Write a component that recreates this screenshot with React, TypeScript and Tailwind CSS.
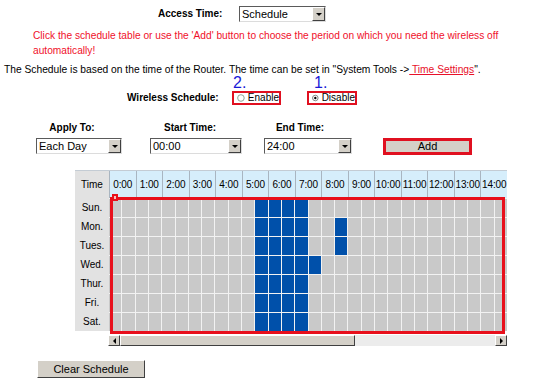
import React from "react";

const blue: Record<string, number[]> = {
  "Sun.": [11, 12, 13, 14],
  "Mon.": [11, 12, 13, 14, 17],
  "Tues.": [11, 12, 13, 14, 17],
  "Wed.": [11, 12, 13, 14, 15],
  "Thur.": [11, 12, 13, 14],
  "Fri.": [11, 12, 13, 14],
  "Sat.": [11, 12, 13, 14],
};
const days = Object.keys(blue);
const hours = Array.from({ length: 15 }, (_, i) => `${i}:00`);

function Arrow({ dir = "down" }: { dir?: "down" | "left" | "right" }) {
  const pts = dir === "down" ? "0,0 6,0 3,3" : dir === "left" ? "3,0 3,6 0,3" : "0,0 0,6 3,3";
  const w = dir === "down" ? 6 : 3;
  const h = dir === "down" ? 3 : 6;
  return (
    <svg width={w} height={h} viewBox={`0 0 ${w} ${h}`}>
      <polygon points={pts} fill="#000" />
    </svg>
  );
}

function Btn3D({ className = "", children }: { className?: string; children?: React.ReactNode }) {
  return (
    <div
      className={`flex items-center justify-center bg-[#d4d0c8] border border-t-white border-l-white border-b-[#404040] border-r-[#404040] ${className}`}
    >
      {children}
    </div>
  );
}

function Sel({ className, value }: { className: string; value: string }) {
  return (
    <div
      className={`flex h-[16px] bg-white border border-t-[#5a5a5a] border-l-[#5a5a5a] border-b-[#dcdcdc] border-r-[#dcdcdc] ${className}`}
    >
      <div className="flex-1 pl-[2px] text-[11px] leading-[14px] text-black">{value}</div>
      <Btn3D className="w-[13px] h-[14px]">
        <Arrow />
      </Btn3D>
    </div>
  );
}

function Radio({ checked }: { checked?: boolean }) {
  return (
    <svg width="10" height="10" viewBox="0 0 10 10">
      <circle cx="5" cy="5" r="4.2" fill="#fff" stroke={checked ? "#6a6a6a" : "#88a090"} strokeWidth="1.2" />
      {checked && <circle cx="5" cy="5" r="1.8" fill="#000" />}
    </svg>
  );
}

export default function App() {
  return (
    <div className="w-[554px] h-[386px] bg-white text-black overflow-hidden font-['Liberation_Sans',Arial,sans-serif] text-[10px]">
      {/* Access time */}
      <div className="flex items-center h-[14px] mt-[7px]">
        <div className="ml-[158px] w-[66px] font-bold text-[10px] leading-[14px]">Access Time:</div>
        <Sel className="ml-[15px] w-[87px] h-[15px]" value="Schedule" />
      </div>

      {/* Red text */}
      <div className="mt-[7px] ml-[33px] text-[10.2px] leading-[15px] text-[#f0102a] whitespace-nowrap">
        Click the schedule table or use the 'Add' button to choose the period on which you need the wireless off
        <br />
        automatically!
      </div>

      {/* Info */}
      <div className="mt-[6px] ml-[4px] text-[10.25px] leading-[11px] whitespace-nowrap">
        The Schedule is based on the time of the Router. The time can be set in "System Tools -&gt;
        <span className="text-[#e8102a] underline"> Time Settings</span>".
      </div>

      {/* Wireless schedule */}
      <div className="flex items-center mt-[16px] h-[13px]">
        <div className="ml-[127px] w-[105px] font-bold leading-[13px] whitespace-nowrap">Wireless Schedule:</div>
        <div className="relative flex items-center gap-[3px] w-[49px] h-[14px] border-2 border-[#e01020] pl-[3px]">
          <span className="absolute left-[-1px] top-[-16px] text-[16px] leading-[11px] text-[#1a1ad8]">2.</span>
          <Radio />
          <span className="leading-[12px]">Enable</span>
        </div>
        <div className="relative flex items-center gap-[3px] ml-[26px] w-[50px] h-[14px] border-2 border-[#e01020] pl-[3px]">
          <span className="absolute left-[5px] top-[-16px] text-[16px] leading-[11px] text-[#1a1ad8]">1.</span>
          <Radio checked />
          <span className="leading-[12px]">Disable</span>
        </div>
      </div>

      {/* Labels */}
      <div className="flex mt-[17px] h-[14px] leading-[14px] font-bold">
        <div className="ml-[30px] w-[84px] text-center">Apply To:</div>
        <div className="ml-[36px] w-[80px] text-center">Start Time:</div>
        <div className="ml-[30px] w-[80px] text-center">End Time:</div>
      </div>

      {/* Selects */}
      <div className="flex items-center mt-[3px] h-[16px]">
        <Sel className="ml-[36px] w-[86px]" value="Each Day" />
        <Sel className="ml-[28px] w-[92px]" value="00:00" />
        <Sel className="ml-[22px] w-[88px]" value="24:00" />
        <div className="ml-[31px] w-[89px] h-[17px] border-[3px] border-[#e01020] bg-[#d4d0c8] flex items-center justify-center text-[11px]">
          Add
        </div>
      </div>

      {/* Schedule grid */}
      <div className="mt-[16px] ml-[75px] w-[432px]">
        {/* header */}
        <div className="flex h-[28px] border-t border-[#c4ccd4]">
          <div className="w-[34px] bg-[#e2e2e2] flex items-center justify-center">Time</div>
          <div className="flex-1 grid grid-cols-[repeat(15,1fr)] bg-[#d6eefb]">
            {hours.map((h) => (
              <div
                key={h}
                className="border-l border-[#a9b5c0] flex items-center justify-center whitespace-nowrap tracking-[-0.1px]"
              >
                {h}
              </div>
            ))}
          </div>
        </div>
        {/* body */}
        <div className="flex">
          <div className="w-[34px] bg-[#e2e2e2]">
            {days.map((d) => (
              <div key={d} className="h-[19px] flex items-center justify-center">
                {d}
              </div>
            ))}
          </div>
          <div className="relative flex-1 bg-[#f2f2f2]">
            <div className="grid grid-cols-[repeat(30,1fr)] grid-rows-[repeat(7,18px)] gap-px pt-px">
              {days.map((d) =>
                Array.from({ length: 30 }, (_, i) => (
                  <div
                    key={`${d}${i}`}
                    className={blue[d].includes(i) ? "bg-[#0050aa]" : "bg-[#c9c9c9]"}
                  />
                ))
              )}
            </div>
            <div className="absolute left-[1px] top-[-1px] right-[2px] bottom-[-3px] border-[3px] border-[#e8101c]" />
            <div className="absolute left-[3px] top-[-4px] w-[6px] h-[7px] border-2 border-[#e8101c] bg-[#f8c0c0]" />
          </div>
        </div>
        {/* scrollbar */}
        <div className="flex ml-[33px] mt-[4px] h-[11px] bg-[#ececec]">
          <Btn3D className="w-[12px] h-[11px]">
            <Arrow dir="left" />
          </Btn3D>
          <div className="w-[235px] h-[11px] bg-[#d4d0c8] border border-t-white border-l-white border-b-[#404040] border-r-[#404040]" />
          <div className="flex-1" />
          <Btn3D className="w-[12px] h-[11px]">
            <Arrow dir="right" />
          </Btn3D>
        </div>
      </div>

      {/* Clear schedule */}
      <Btn3D className="ml-[37px] mt-[14px] w-[108px] h-[18px] text-[11px]">Clear Schedule</Btn3D>
    </div>
  );
}
